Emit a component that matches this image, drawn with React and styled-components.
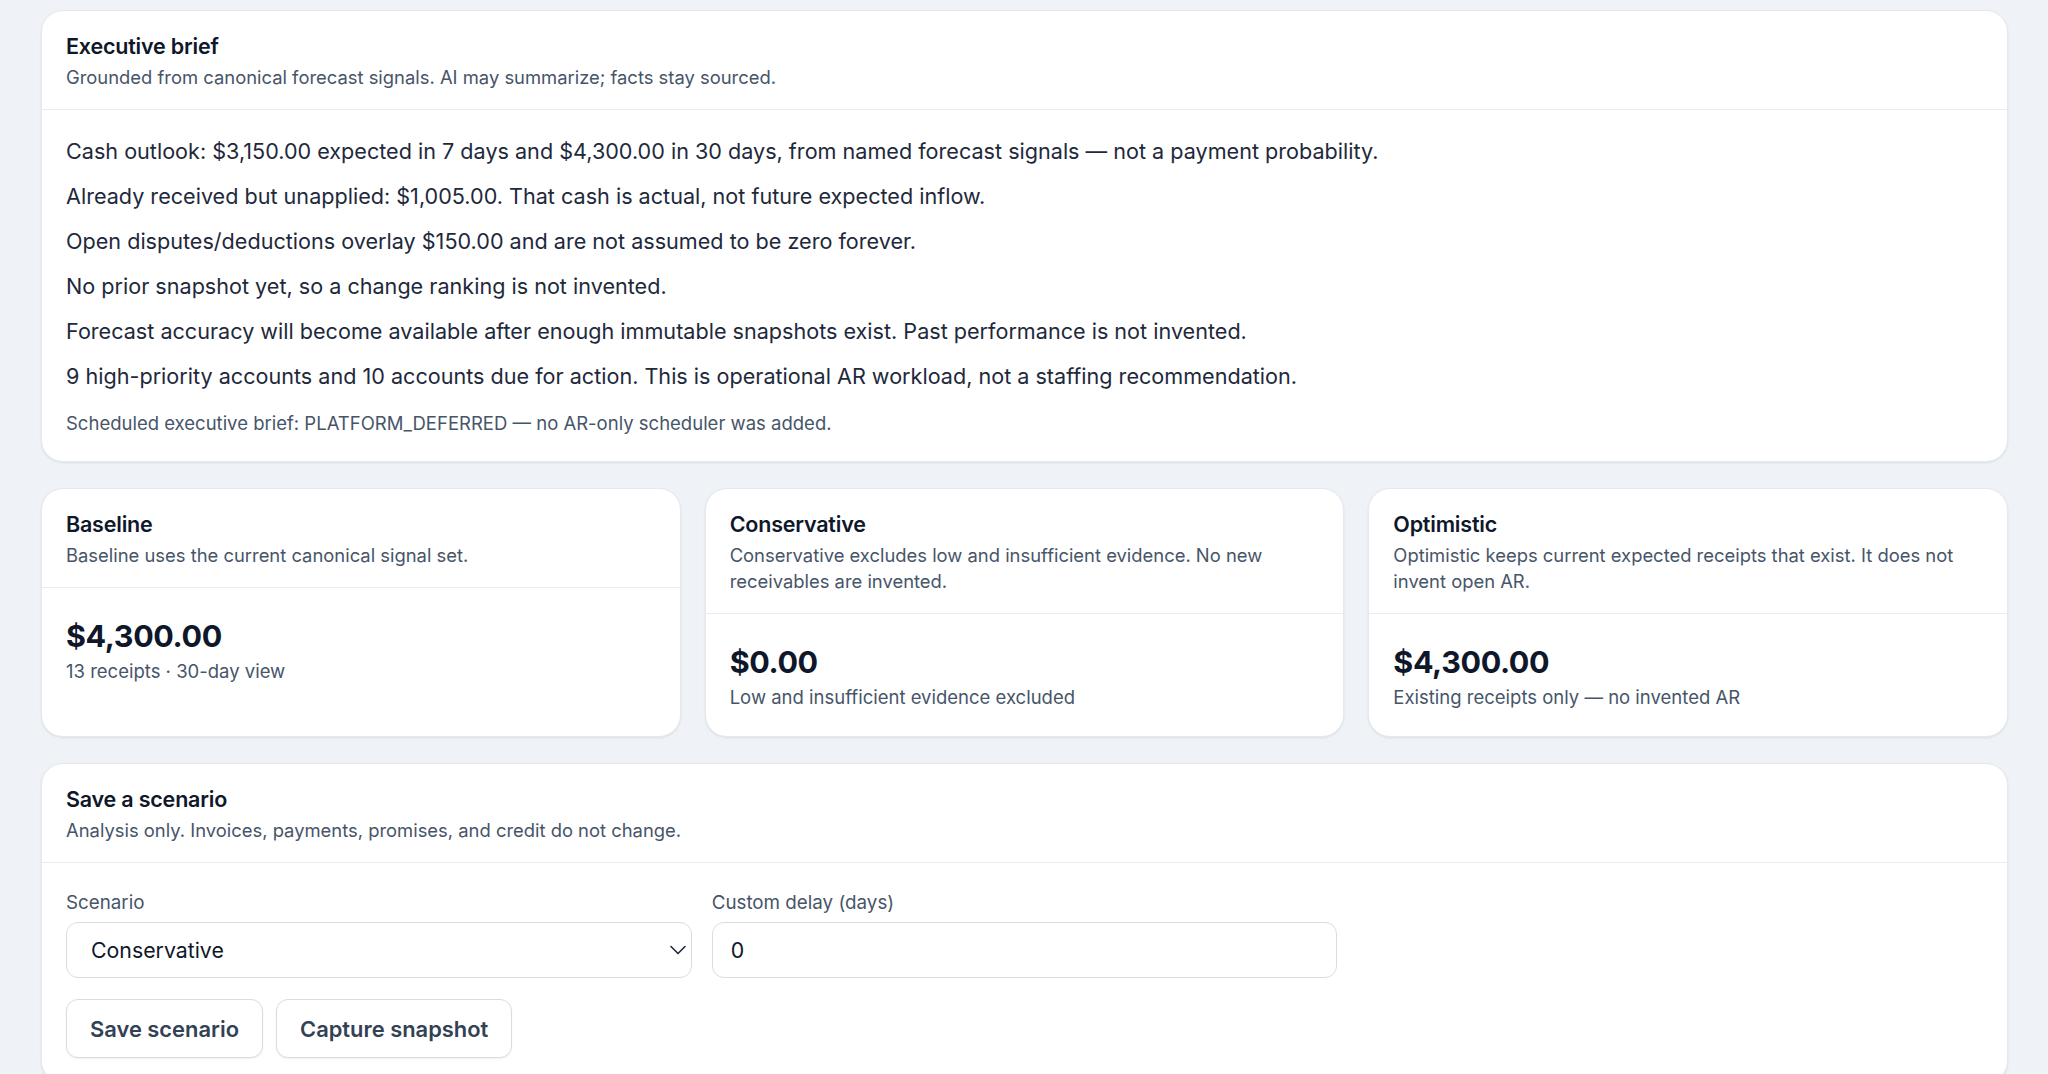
import React from "react";
import styled, { createGlobalStyle } from "styled-components";

const GlobalStyle = createGlobalStyle`
  html, body {
    margin: 0;
    padding: 0;
    background: #eff3f8;
  }
  body {
    font-family: Inter, "Noto Sans", "Liberation Sans", sans-serif;
    color: #1e293b;
    -webkit-font-smoothing: antialiased;
  }
  * { box-sizing: border-box; }
`;

const Page = styled.main`
  display: flex;
  flex-direction: column;
  gap: 26px;
  padding: 10px 40px 0 41px;
`;

const Card = styled.section`
  background: #ffffff;
  border: 1px solid #e4e9f0;
  border-radius: 22px;
  box-shadow: 0 1px 3px rgba(15, 23, 42, 0.06), 0 1px 2px rgba(15, 23, 42, 0.03);
  display: flex;
  flex-direction: column;
  overflow: hidden;
`;

const CardHeader = styled.header`
  padding: 21px 24px 19px;
  border-bottom: 1px solid #e8ecf2;
  display: flex;
  flex-direction: column;
  gap: 4px;
`;

const Title = styled.h2`
  margin: 0;
  font-size: 21.5px;
  line-height: 28px;
  font-weight: 600;
  color: #0f172a;
  letter-spacing: -0.2px;
`;

const Subtitle = styled.p`
  margin: 0;
  font-size: 18.4px;
  line-height: 26px;
  color: #475569;
`;

const BriefBody = styled.div`
  padding: 26px 24px 25px;
  display: flex;
  flex-direction: column;
  gap: 15px;
`;

const BriefLine = styled.p`
  margin: 0;
  font-size: 21.6px;
  line-height: 30px;
  color: #1e293b;
`;

const Footnote = styled.p`
  margin: 5px 0 0;
  font-size: 18.5px;
  line-height: 25px;
  color: #475569;
`;

const ScenarioGrid = styled.div`
  display: grid;
  grid-template-columns: repeat(3, 1fr);
  gap: 24px;
`;

const MetricBody = styled.div`
  padding: 30px 24px 26px;
  display: flex;
  flex-direction: column;
  gap: 5px;
`;

const MetricValue = styled.div`
  font-size: 30.5px;
  line-height: 36px;
  font-weight: 700;
  color: #0f172a;
  letter-spacing: -0.4px;
`;

const MetricNote = styled.div`
  font-size: 18.5px;
  line-height: 25px;
  color: #475569;
`;

const FormBody = styled.div`
  padding: 28px 24px 24px;
  display: flex;
  flex-direction: column;
  gap: 21px;
`;

const FieldGrid = styled.div`
  display: grid;
  grid-template-columns: repeat(3, 1fr);
  gap: 20px;
`;

const Field = styled.label`
  display: flex;
  flex-direction: column;
  gap: 7px;
`;

const FieldLabel = styled.span`
  font-size: 18.8px;
  line-height: 24px;
  color: #475569;
`;

const SelectWrap = styled.div`
  position: relative;
`;

const controlStyles = `
  width: 100%;
  height: 56px;
  border: 1px solid #d6dce5;
  border-radius: 12px;
  background: #ffffff;
  font-family: Inter, "Noto Sans", "Liberation Sans", sans-serif;
  font-size: 21.3px;
  color: #0f172a;
  outline: none;
`;

const Select = styled.select`
  ${controlStyles}
  appearance: none;
  -webkit-appearance: none;
  padding: 0 48px 0 24px;
`;

const Chevron = styled.svg`
  position: absolute;
  right: 6px;
  top: 50%;
  width: 16px;
  height: 16px;
  margin-top: -8px;
  pointer-events: none;
`;

const Input = styled.input`
  ${controlStyles}
  padding: 0 18px;
`;

const ButtonRow = styled.div`
  display: flex;
  gap: 13px;
`;

const Button = styled.button`
  height: 59px;
  padding: 0 23px;
  border: 1px solid #d6dce5;
  border-radius: 12px;
  background: #ffffff;
  box-shadow: 0 1px 2px rgba(15, 23, 42, 0.06);
  font-family: Inter, "Noto Sans", "Liberation Sans", sans-serif;
  font-size: 21.9px;
  font-weight: 600;
  color: #334155;
  cursor: pointer;
`;

const briefLines = [
  "Cash outlook: $3,150.00 expected in 7 days and $4,300.00 in 30 days, from named forecast signals — not a payment probability.",
  "Already received but unapplied: $1,005.00. That cash is actual, not future expected inflow.",
  "Open disputes/deductions overlay $150.00 and are not assumed to be zero forever.",
  "No prior snapshot yet, so a change ranking is not invented.",
  "Forecast accuracy will become available after enough immutable snapshots exist. Past performance is not invented.",
  "9 high-priority accounts and 10 accounts due for action. This is operational AR workload, not a staffing recommendation.",
];

const scenarios = [
  {
    name: "Baseline",
    description: "Baseline uses the current canonical signal set.",
    value: "$4,300.00",
    note: "13 receipts · 30-day view",
  },
  {
    name: "Conservative",
    description: "Conservative excludes low and insufficient evidence. No new receivables are invented.",
    value: "$0.00",
    note: "Low and insufficient evidence excluded",
  },
  {
    name: "Optimistic",
    description: "Optimistic keeps current expected receipts that exist. It does not invent open AR.",
    value: "$4,300.00",
    note: "Existing receipts only — no invented AR",
  },
];

export default function App() {
  return (
    <>
      <GlobalStyle />
      <Page>
        <Card>
          <CardHeader>
            <Title>Executive brief</Title>
            <Subtitle>Grounded from canonical forecast signals. AI may summarize; facts stay sourced.</Subtitle>
          </CardHeader>
          <BriefBody>
            {briefLines.map((line) => (
              <BriefLine key={line}>{line}</BriefLine>
            ))}
            <Footnote>Scheduled executive brief: PLATFORM_DEFERRED — no AR-only scheduler was added.</Footnote>
          </BriefBody>
        </Card>

        <ScenarioGrid>
          {scenarios.map((s) => (
            <Card key={s.name}>
              <CardHeader>
                <Title>{s.name}</Title>
                <Subtitle>{s.description}</Subtitle>
              </CardHeader>
              <MetricBody>
                <MetricValue>{s.value}</MetricValue>
                <MetricNote>{s.note}</MetricNote>
              </MetricBody>
            </Card>
          ))}
        </ScenarioGrid>

        <Card>
          <CardHeader>
            <Title>Save a scenario</Title>
            <Subtitle>Analysis only. Invoices, payments, promises, and credit do not change.</Subtitle>
          </CardHeader>
          <FormBody>
            <FieldGrid>
              <Field>
                <FieldLabel>Scenario</FieldLabel>
                <SelectWrap>
                  <Select defaultValue="conservative">
                    <option value="baseline">Baseline</option>
                    <option value="conservative">Conservative</option>
                    <option value="optimistic">Optimistic</option>
                  </Select>
                  <Chevron viewBox="0 0 16 16" fill="none" stroke="#1e293b" strokeWidth="1.6" strokeLinecap="round" strokeLinejoin="round">
                    <path d="M1 4.5 L8 11.5 L15 4.5" />
                  </Chevron>
                </SelectWrap>
              </Field>
              <Field>
                <FieldLabel>Custom delay (days)</FieldLabel>
                <Input type="text" defaultValue="0" />
              </Field>
            </FieldGrid>
            <ButtonRow>
              <Button type="button">Save scenario</Button>
              <Button type="button">Capture snapshot</Button>
            </ButtonRow>
          </FormBody>
        </Card>
      </Page>
    </>
  );
}
